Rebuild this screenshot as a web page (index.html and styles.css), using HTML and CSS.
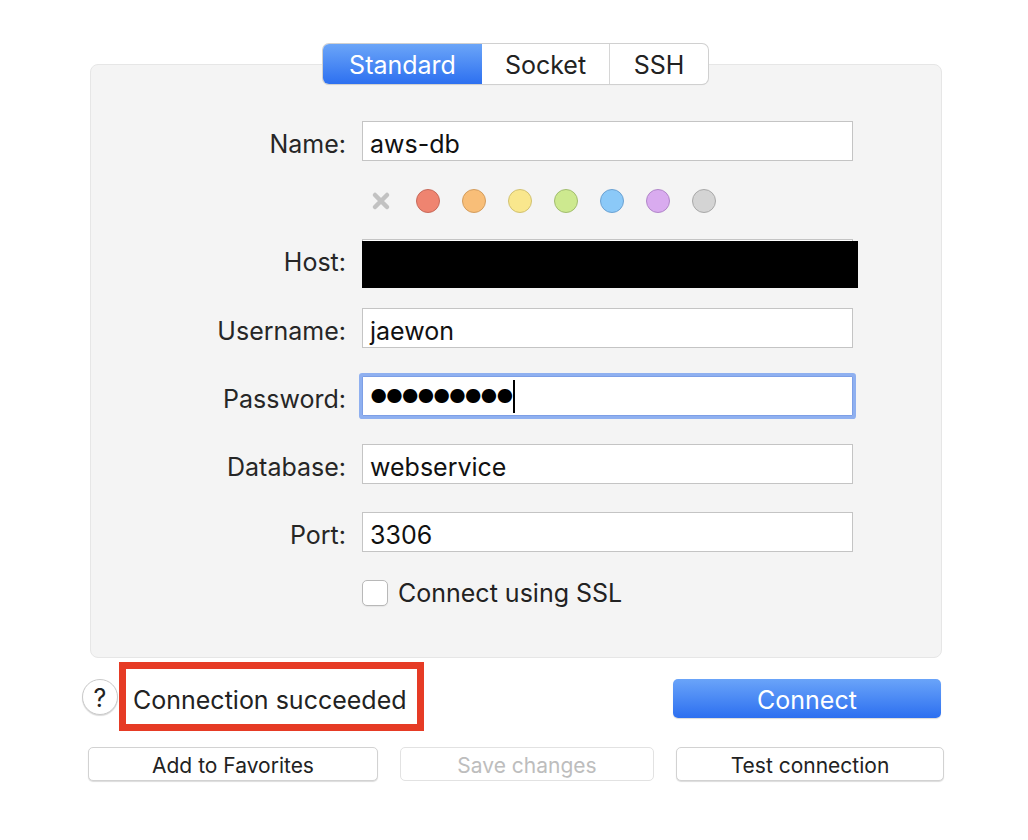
FILE: index.html
```html
<!DOCTYPE html>
<html>
<head>
<meta charset="utf-8">
<link rel="stylesheet" href="styles.css">
</head>
<body>
<div class="page">
  <div class="tabs">
    <div class="tab active">Standard</div>
    <div class="tab tab-socket">Socket</div>
    <div class="tab tab-ssh">SSH</div>
  </div>
  <div class="panel">
    <div class="row">
      <div class="label">Name:</div>
      <div class="field">aws-db</div>
    </div>
    <div class="row dots-row">
      <div class="label"></div>
      <div class="dots">
        <svg class="xmark" width="20" height="20" viewBox="0 0 20 20"><path d="M4 4 L16 16 M16 4 L4 16" stroke="#c2c2c2" stroke-width="4.5" stroke-linecap="round"/></svg>
        <span class="dot red"></span>
        <span class="dot orange"></span>
        <span class="dot yellow"></span>
        <span class="dot green"></span>
        <span class="dot blue"></span>
        <span class="dot purple"></span>
        <span class="dot gray"></span>
      </div>
    </div>
    <div class="row host-row">
      <div class="label">Host:</div>
      <div class="field host-field"><div class="redact"></div></div>
    </div>
    <div class="row">
      <div class="label">Username:</div>
      <div class="field">jaewon</div>
    </div>
    <div class="row">
      <div class="label">Password:</div>
      <div class="field focused"><span class="pw">●●●●●●●●●</span><span class="caret"></span></div>
    </div>
    <div class="row">
      <div class="label">Database:</div>
      <div class="field">webservice</div>
    </div>
    <div class="row">
      <div class="label">Port:</div>
      <div class="field">3306</div>
    </div>
    <div class="row ssl-row">
      <div class="label"></div>
      <label class="ssl"><span class="checkbox"></span>Connect using SSL</label>
    </div>
  </div>
  <div class="status-row">
    <div class="help">?</div>
    <div class="status">Connection succeeded</div>
    <div class="spacer"></div>
    <div class="connect">Connect</div>
  </div>
  <div class="button-row">
    <div class="btn fav">Add to Favorites</div>
    <div class="btn save disabled">Save changes</div>
    <div class="btn test">Test connection</div>
  </div>
</div>
</body>
</html>
```
FILE: styles.css
```css
* { box-sizing: border-box; }
html, body {
  margin: 0;
  padding: 0;
  background: #ffffff;
}
body {
  font-family: "Inter", "Liberation Sans", sans-serif;
  color: #222222;
  width: 1028px;
  height: 840px;
  overflow: hidden;
}
.page {
  padding-top: 44px;
}
.tabs {
  display: flex;
  width: 385px;
  height: 40px;
  margin-left: 323px;
  margin-bottom: -20px;
  position: relative;
  z-index: 1;
  border-radius: 6px;
  background: #ffffff;
  box-shadow: 0 0 0 1px #d0d0d0, 0 1px 1px rgba(0,0,0,0.12);
}
.tab {
  display: flex;
  align-items: center;
  justify-content: center;
  font-size: 25px;
  color: #222;
  height: 40px;
  padding-top: 2px;
}
.tab.active {
  width: 159px;
  color: #ffffff;
  background: linear-gradient(#6ba5f8, #2d70f0);
  border-radius: 6px 0 0 6px;
}
.tab-socket {
  width: 128px;
  border-right: 1px solid #d6d6d6;
}
.tab-ssh {
  width: 98px;
}
.panel {
  width: 852px;
  height: 594px;
  margin-left: 90px;
  background: #f4f4f4;
  border: 1px solid #e6e6e6;
  border-radius: 8px;
  padding-top: 56px;
}
.row {
  display: flex;
  align-items: center;
  height: 40px;
  margin-bottom: 28px;
}
.label {
  width: 255px;
  text-align: right;
  font-size: 25px;
  color: #262626;
  flex: none;
  padding-top: 6px;
}
.field {
  margin-left: 16px;
  width: 491px;
  height: 40px;
  background: #ffffff;
  border: 1px solid #c4c4c4;
  font-size: 25px;
  color: #111;
  display: flex;
  align-items: center;
  padding-left: 7px;
  padding-top: 6px;
  position: relative;
}
.dots-row {
  height: 24px;
  margin-top: 4px;
  margin-bottom: 26px;
}
.dots {
  margin-left: 16px;
  display: flex;
  align-items: center;
  gap: 22px;
  padding-left: 9px;
}
.xmark {
  margin-right: 3px;
}
.dot {
  width: 24px;
  height: 24px;
  border-radius: 50%;
  border: 1.5px solid;
  display: block;
}
.dot.red { background: #ef8470; border-color: #c76a5b; }
.dot.orange { background: #f8be78; border-color: #d39d5e; }
.dot.yellow { background: #f9e78d; border-color: #d1c171; }
.dot.green { background: #cde98f; border-color: #a2bd70; }
.dot.blue { background: #8bc9f8; border-color: #6ca2d2; }
.dot.purple { background: #d9abef; border-color: #b187c9; }
.dot.gray { background: #d4d4d4; border-color: #a9a9a9; }
.host-row {
  margin-bottom: 29px;
}
.redact {
  position: absolute;
  left: -1px;
  top: 1px;
  width: 496px;
  height: 47px;
  background: #000000;
}
.focused {
  box-shadow: 0 0 0 3px #8fb0f0;
  border-color: #7d9fe6;
  border-radius: 1px;
  padding-top: 0;
}
.pw {
  font-size: 19px;
  letter-spacing: -1.6px;
  color: #000;
}
.caret {
  display: inline-block;
  width: 2px;
  height: 33px;
  background: #000;
  margin-left: 1px;
}
.ssl-row {
  height: 26px;
  margin-top: 1px;
}
.ssl {
  margin-left: 16px;
  display: flex;
  align-items: center;
  font-size: 25px;
  color: #222;
}
.checkbox {
  width: 26px;
  height: 26px;
  border: 1px solid #b8b8b8;
  border-radius: 5px;
  background: #fff;
  margin-right: 10px;
  box-shadow: 0 1px 1px rgba(0,0,0,0.06);
}
.status-row {
  display: flex;
  align-items: center;
  margin-top: 4px;
  height: 69px;
  padding-left: 82px;
}
.help {
  width: 36px;
  height: 36px;
  border-radius: 50%;
  border: 1px solid #cacaca;
  background: #fff;
  box-shadow: 0 1px 1px rgba(0,0,0,0.15);
  display: flex;
  align-items: center;
  justify-content: center;
  font-size: 25px;
  color: #222;
  flex: none;
  padding-top: 2px;
}
.status {
  margin-left: 1px;
  width: 305px;
  height: 69px;
  border: 7px solid #e63b25;
  display: flex;
  align-items: center;
  padding-left: 7px;
  padding-top: 6px;
  font-size: 25px;
  color: #222;
  white-space: nowrap;
  flex: none;
}
.spacer {
  width: 249px;
  flex: none;
}
.connect {
  width: 268px;
  height: 39px;
  margin-top: 4px;
  border-radius: 5px;
  background: linear-gradient(#6aa4f9, #2c6ff0);
  color: #fff;
  font-size: 25px;
  display: flex;
  align-items: center;
  justify-content: center;
  padding-top: 3px;
  box-shadow: 0 1px 1px rgba(0,0,0,0.15);
  flex: none;
}
.button-row {
  display: flex;
  margin-top: 16px;
  padding-left: 88px;
  height: 34px;
}
.btn {
  height: 34px;
  border-radius: 5px;
  background: #fff;
  border: 1px solid #d2d2d2;
  box-shadow: 0 1px 1px rgba(0,0,0,0.14);
  display: flex;
  align-items: center;
  justify-content: center;
  font-size: 21px;
  color: #222;
  flex: none;
  padding-top: 2px;
}
.fav { width: 290px; }
.save { width: 254px; margin-left: 22px; }
.test { width: 268px; margin-left: 22px; }
.disabled {
  color: #bdbdbd;
  box-shadow: none;
  border-color: #e2e2e2;
}
```
